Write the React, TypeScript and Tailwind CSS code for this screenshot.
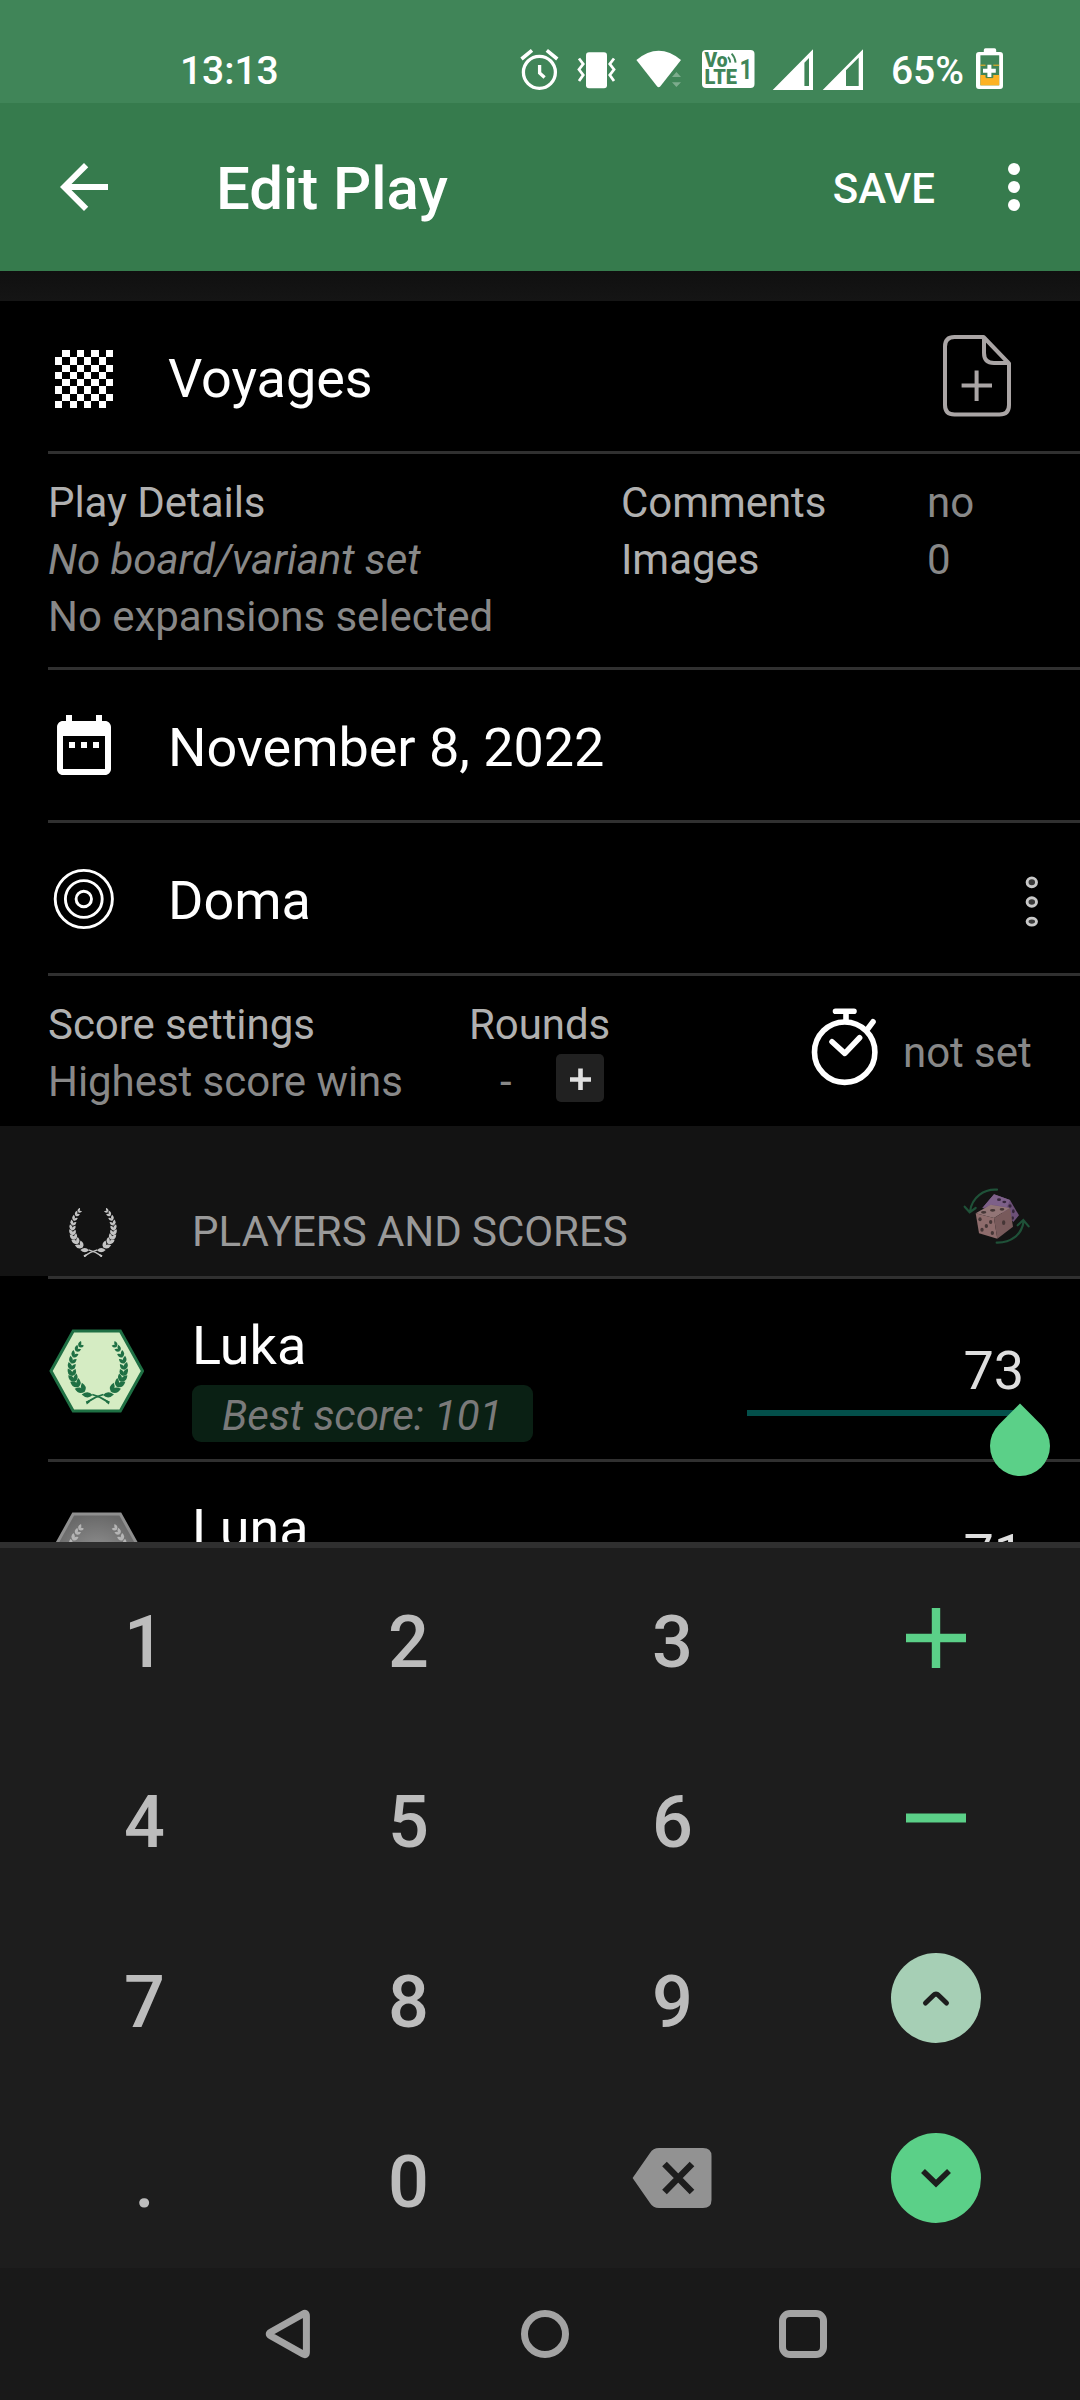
import React from "react";

const Divider = () => <div className="ml-12 h-[3px] shrink-0 bg-[#303030]" />;

type Side = { flip?: boolean };

// Left half of the wreath; leaves are spread along a cubic spine.
const spine = (t: number) => {
  const p = [
    [27, 54],
    [-1, 47],
    [-2, 17],
    [15, 1],
  ];
  const u = 1 - t;
  const x = u * u * u * p[0][0] + 3 * u * u * t * p[1][0] + 3 * u * t * t * p[2][0] + t * t * t * p[3][0];
  const y = u * u * u * p[0][1] + 3 * u * u * t * p[1][1] + 3 * u * t * t * p[2][1] + t * t * t * p[3][1];
  const dx = 3 * u * u * (p[1][0] - p[0][0]) + 6 * u * t * (p[2][0] - p[1][0]) + 3 * t * t * (p[3][0] - p[2][0]);
  const dy = 3 * u * u * (p[1][1] - p[0][1]) + 6 * u * t * (p[2][1] - p[1][1]) + 3 * t * t * (p[3][1] - p[2][1]);
  return { x, y, a: (Math.atan2(dy, dx) * 180) / Math.PI };
};

const LEAVES = [0.02, 0.13, 0.24, 0.34, 0.44, 0.54, 0.64, 0.74, 0.84, 0.92];

const Branch = ({ flip }: Side) => (
  <g transform={flip ? "translate(61 0) scale(-1 1)" : undefined}>
    {LEAVES.map((t, i) => {
      const s = spine(t);
      const l = 11 - i * 0.55;
      const w = 5.4 - i * 0.27;
      const d = `M0 0Q${l * 0.45} ${-w} ${l} 0Q${l * 0.45} ${w} 0 0Z`;
      return (
        <g key={t} transform={`translate(${s.x} ${s.y})`}>
          <path d={d} transform={`rotate(${s.a - 14})`} />
          {i > 0 && <path d={d} transform={`rotate(${s.a + 42}) scale(0.9)`} />}
        </g>
      );
    })}
    <path d="M37.500 58L42.500 60L41.500 63L39 61Z" />
    <path d="M25 53Q34 55.500 41.500 61" fill="none" stroke="currentColor" strokeWidth="1.7" />
  </g>
);

const Wreath = () => (
  <g fill="currentColor">
    <Branch />
    <Branch flip />
  </g>
);

const HexBadge = ({ muted }: { muted?: boolean }) => (
  <svg className="h-[84px] w-24 shrink-0" viewBox="48 1329.5 96 84">
    <defs>
      <radialGradient id="steel">
        <stop offset="0" stopColor="#929292" />
        <stop offset="1" stopColor="#686868" />
      </radialGradient>
    </defs>
    <path
      d="M51 1371.5L73.2 1331.5H120.3L142.5 1371.5L120.3 1411.5H73.2Z"
      fill={muted ? "url(#steel)" : "#d5ecc3"}
      stroke={muted ? "#8f8f8f" : "#1f7044"}
      strokeWidth="3"
    />
    <g transform="translate(67.3 1342)" className={muted ? "text-[#b5b5b5]" : "text-[#1f7044]"}>
      <Wreath />
    </g>
  </svg>
);

const StatusBar = () => (
  <div className="flex h-[103px] shrink-0 items-start bg-[#408558] text-[39px] font-medium leading-[46px]">
    <div className="ml-[180px] w-[340px] pt-[48px]">13:13</div>
    <svg className="mt-[47px] h-[46px] w-[370px]" viewBox="520 47 370 46" fill="none" stroke="#fff" strokeWidth="3.3">
      <circle cx="539.4" cy="72.3" r="16" />
      <path d="M521.5 59L532 50.3M557.3 59L546.8 50.3" strokeWidth="3.6" />
      <path d="M539.6 65V73L544.6 77.5" />
      <rect x="586" y="52.3" width="21" height="36" rx="3" fill="#fff" stroke="none" />
      <path d="M579 58.5L583.2 64L579 69.5L583.2 75L579 81M614 58.5L609.8 64L614 69.5L609.8 75L614 81" strokeWidth="2.8" />
      <path d="M636.4 60Q658.7 41.6 681 60L660.2 86.5Q658.7 88 657.2 86.5Z" fill="#fff" stroke="none" />
      <path d="M672 77L676.4 72L681 77ZM672 82.3L676.4 87L681 82.3Z" fill="#fff" fillOpacity="0.32" stroke="none" />
      <rect x="702" y="50" width="52.5" height="38" rx="4" fill="#fff" stroke="none" />
      <g fill="#408558" stroke="none" className="font-black">
        <text x="704.5" y="67.4" fontSize="19.5" textLength="23" lengthAdjust="spacingAndGlyphs">Vo</text>
        <text x="704.5" y="83.8" fontSize="19.5" textLength="32.5" lengthAdjust="spacingAndGlyphs">LTE</text>
        <text x="739.6" y="79.4" fontSize="27" textLength="13" lengthAdjust="spacingAndGlyphs" className="font-bold">1</text>
      </g>
      <path d="M728 57Q730 59 730.3 62.6M731.6 53.6Q735 57 735.6 62.6" stroke="#408558" strokeWidth="1.9" />
      <path d="M813 49.3V90H772.7ZM809 58L804.4 62.7V86H809Z" fill="#fff" fillRule="evenodd" stroke="none" />
      <path d="M863 49.3V90H822.7ZM858.7 57.5L846 70.3V86H858.7Z" fill="#fff" fillRule="evenodd" stroke="none" />
    </svg>
    <div className="w-[86px] pl-px pt-[48px]">65%</div>
    <svg className="mt-[47px] h-[46px] w-[28px]" viewBox="976 47 28 46">
      <path d="M983.8 52V50Q983.8 48.3 985.5 48.3H994.5Q996.2 48.3 996.2 50V52H1000Q1003 52 1003 55V86Q1003 89 1000 89H979Q976 89 976 86V55Q976 52 979 52Z" fill="#fff" />
      <rect x="980.4" y="55.3" width="18.8" height="30" fill="#408558" />
      <rect x="980.4" y="75" width="18.8" height="10.3" fill="#fdb223" />
      <rect x="980.4" y="64.7" width="18.8" height="1" fill="#fdb223" />
      <path d="M986 64H992.8V67.4H996.4V74.2H992.8V77.6H986V74.2H982.6V67.4H986Z" fill="#408558" stroke="#408558" />
      <path d="M989.4 64.7V77M983 70.8H995.8" stroke="#fff" strokeWidth="4" />
    </svg>
  </div>
);

const AppBar = () => (
  <div className="flex h-[168px] shrink-0 items-center bg-[#367b4d] font-medium">
    <svg className="ml-12 size-[72px]" viewBox="0 0 24 24" fill="#fff">
      <path d="M20 11H7.83l5.59-5.59L12 4l-8 8 8 8 1.41-1.41L7.83 13H20v-2z" />
    </svg>
    <div className="ml-24 flex-1 pt-[4px] text-[60px] leading-[70px]">Edit Play</div>
    <div className="mr-[43px] pt-[4px] text-[42px] leading-[50px]">SAVE</div>
    <svg className="mr-[30px] size-[72px]" viewBox="0 0 24 24" fill="#fff">
      <circle cx="12" cy="6" r="2" />
      <circle cx="12" cy="12" r="2" />
      <circle cx="12" cy="18" r="2" />
    </svg>
  </div>
);

const Checkerboard = () => (
  <svg className="ml-[55px] mt-[5px] h-[58px] w-[58px]" viewBox="0 0 8 8" fill="#fff" shapeRendering="crispEdges">
    {Array.from({ length: 64 }, (_, i) => [i % 8, Math.floor(i / 8)])
      .filter(([c, r]) => (c + r) % 2 === 1)
      .map(([c, r]) => (
        <rect key={`${c}-${r}`} x={c} y={r} width="1" height="1" />
      ))}
  </svg>
);

const GameRow = () => (
  <div className="flex h-[150px] shrink-0 items-center text-[54px] leading-[64px]">
    <Checkerboard />
    <div className="ml-[55px] flex-1 pt-1.5">Voyages</div>
    <svg className="mr-[68px] h-[84px] w-[70px]" viewBox="942 334 70 84" fill="none" stroke="#aaa5a5" strokeWidth="4">
      <path d="M983.5 337H954.5Q945 337 945 346.500V405Q945 414.500 954.500 414.500H999.500Q1009 414.500 1009 405V363.500Z" strokeLinejoin="round" />
      <path d="M984 338V353Q984 363 994 363H1008" />
      <path d="M976.600 370.500V401M961.600 385.600H992" />
    </svg>
  </div>
);

const DetailsRow = () => (
  <div className="flex h-[213px] shrink-0 pl-12 pt-5 text-[42px] leading-[57px] text-[#888]">
    <div className="w-[573px]">
      <div className="text-[#b0b0b0]">Play Details</div>
      <div className="italic">No board/variant set</div>
      <div>No expansions selected</div>
    </div>
    <div className="w-[306px] text-[#b0b0b0]">
      <div>Comments</div>
      <div>Images</div>
    </div>
    <div>
      <div>no</div>
      <div>0</div>
    </div>
  </div>
);

const DateRow = () => (
  <div className="flex h-[150px] shrink-0 items-center text-[54px] leading-[64px]">
    <svg className="ml-12 size-[72px]" viewBox="0 0 24 24" fill="#fff">
      <path d="M9 11H7v2h2v-2zm4 0h-2v2h2v-2zm4 0h-2v2h2v-2zm2-7h-1V2h-2v2H8V2H6v2H5c-1.11 0-1.99.9-1.99 2L3 20c0 1.1.89 2 2 2h14c1.1 0 2-.9 2-2V6c0-1.1-.9-2-2-2zm0 16H5V9h14v11z" />
    </svg>
    <div className="ml-12 pt-1.5">November 8, 2022</div>
  </div>
);

const PlaceRow = () => (
  <div className="flex h-[150px] shrink-0 items-center text-[54px] leading-[64px]">
    <svg className="ml-12 size-[72px]" viewBox="0 0 72 72" fill="none" stroke="#fff" strokeWidth="2.9">
      <circle cx="35.800" cy="37" r="28.600" />
      <circle cx="35.800" cy="37" r="18.400" />
      <circle cx="35.800" cy="37" r="7.700" />
    </svg>
    <div className="ml-12 flex-1 pt-1.5">Doma</div>
    <svg className="mr-[40px] mt-2 h-[54px] w-[16px]" viewBox="1024 875 16 54" fill="#3a3a3a" stroke="#c8c8c8" strokeWidth="2.900">
      <ellipse cx="1031.800" cy="882.300" rx="4.700" ry="4.400" />
      <ellipse cx="1031.800" cy="902" rx="4.700" ry="4.200" />
      <ellipse cx="1031.800" cy="921.600" rx="4.700" ry="3.500" />
    </svg>
  </div>
);

const ScoreRow = () => (
  <div className="flex h-[150px] shrink-0 pl-12 text-[42px] leading-[57px] text-[#888]">
    <div className="w-[421px] pt-5">
      <div className="text-[#b0b0b0]">Score settings</div>
      <div>Highest score wins</div>
    </div>
    <div className="w-[341px] pt-5">
      <div className="text-[#b0b0b0]">Rounds</div>
      <div className="flex items-start">
        <div className="w-[87px] pl-[31px]">-</div>
        <div className="mt-[1px] flex size-12 items-center justify-center rounded-[5px] bg-[#212121]">
          <svg className="size-6" viewBox="0 0 24 24" stroke="#e0e0e0" strokeWidth="4.600">
            <path d="M12.500 3V25M2 14H23" transform="translate(0 -0.500)" />
          </svg>
        </div>
      </div>
    </div>
    <svg className="mt-[30px] h-[82px] w-[70px]" viewBox="810 1006 70 82" fill="none" stroke="#fff" strokeWidth="5.600" strokeLinecap="round" strokeLinejoin="round">
      <circle cx="844.700" cy="1052.200" r="30.200" />
      <path d="M835.500 1011.200H854M846 1012V1021M868 1028.500L873 1021.800M832 1041.800L844.800 1053.400L859.600 1037.800" />
    </svg>
    <div className="ml-[23px] pt-12">not set</div>
  </div>
);

const Dice = () => (
  <svg className="mr-[46px] mt-[56px] h-[64px] w-[74px]" viewBox="598 1024 222 192">
    <path d="M665 1102L700 1061L748 1078L775 1124L758 1144L740 1120Z" fill="#6c5078" />
    <path d="M700 1061L748 1078L738 1100L695 1092L665 1102Z" fill="#7d6089" />
    <g fill="#35263b">
      <ellipse cx="715" cy="1077" rx="6" ry="4" />
      <ellipse cx="731" cy="1084" rx="6" ry="3.500" />
      <ellipse cx="748" cy="1096" rx="5" ry="5" />
      <ellipse cx="758" cy="1112" rx="4" ry="6" />
      <ellipse cx="756" cy="1132" rx="4" ry="5" />
    </g>
    <path d="M645 1118L690 1092L748 1102L700 1132Z" fill="#927576" />
    <path d="M645 1118L700 1132L710 1194L655 1178Z" fill="#8e6c6c" />
    <path d="M700 1132L748 1102L757 1158L710 1194Z" fill="#785a5b" />
    <g fill="#453636">
      <ellipse cx="669" cy="1115" rx="8" ry="4" />
      <ellipse cx="696" cy="1109" rx="8" ry="4" />
      <ellipse cx="724" cy="1106" rx="7" ry="4" />
      <ellipse cx="658" cy="1136" rx="5" ry="6" />
      <ellipse cx="690" cy="1144" rx="5" ry="6" />
      <ellipse cx="677" cy="1156" rx="5" ry="6" />
      <ellipse cx="664" cy="1167" rx="5" ry="6" />
      <ellipse cx="695" cy="1177" rx="5" ry="6" />
      <ellipse cx="729" cy="1146" rx="5" ry="7" />
    </g>
    <g fill="none" stroke="#1f5138" strokeWidth="6.500" strokeLinecap="round">
      <path d="M709 1047C670 1044 634 1070 628 1112M612 1098L627 1115L645 1102" />
      <path d="M708 1206C750 1207 784 1183 789 1141M771 1154L788 1138L804 1157" />
    </g>
  </svg>
);

const PlayersHeader = () => (
  <div className="flex h-[150px] shrink-0 bg-[#131313] text-[42px] leading-[50px] text-[#999]">
    <svg className="ml-[69px] mt-[82px] h-[49px] w-[48px] text-[#c4c4c4]" viewBox="0 0 61 62">
      <Wreath />
    </svg>
    <div className="ml-[75px] flex-1 pt-[81px]">PLAYERS AND SCORES</div>
    <Dice />
  </div>
);

const Player = ({ name, score, best }: { name: string; score: string; best?: string }) => (
  <div className="flex h-[180px] shrink-0 items-start pl-12">
    <div className="pt-[50px]">
      <HexBadge muted={!best} />
    </div>
    <div className="ml-12 w-[555px] pt-[35px] text-[54px] leading-[64px]">
      <div>{name}</div>
      {best && (
        <div className="mt-[7px] h-[57px] w-[341px] rounded-[9px] bg-[#0a2014] pl-[30px] pt-[2px] text-[42px] italic leading-[57px] text-[#7a7a7a]">
          {best}
        </div>
      )}
    </div>
    <div className="relative w-[276px] pt-[60px] text-right text-[54px] leading-[64px] text-[#dedede]">
      <div className="-mr-px">{score}</div>
      {best && (
        <>
          <div className="mt-[7px] h-[6px] bg-[#034f4a]" />
          <div className="absolute -right-[27px] top-[137px] size-[60px] rotate-45 rounded-full rounded-tl-none bg-[#5bd088]" />
        </>
      )}
    </div>
  </div>
);

const Key = ({ children }: { children: React.ReactNode }) => (
  <div className="flex items-center justify-center">{children}</div>
);

const Digit = ({ d }: { d: string }) => (
  <Key>
    <span className="pl-px pt-[9px] leading-[84px]">{d}</span>
  </Key>
);

const Keypad = () => (
  <div className="grid h-[726px] shrink-0 grid-cols-4 grid-rows-4 border-t-[6px] border-[#2f2f2f] bg-[#1d1d1d] px-3 text-[72px] font-medium text-[#bcbcbc]">
    <Digit d="1" />
    <Digit d="2" />
    <Digit d="3" />
    <Key>
      <svg className="size-[60px]" viewBox="0 0 60 60" stroke="#5bd088" strokeWidth="8.400">
        <path d="M30 0V60M0 30H60" />
      </svg>
    </Key>
    <Digit d="4" />
    <Digit d="5" />
    <Digit d="6" />
    <Key>
      <svg className="size-[60px]" viewBox="0 0 60 60" stroke="#5bd088" strokeWidth="9">
        <path d="M0 30H60" />
      </svg>
    </Key>
    <Digit d="7" />
    <Digit d="8" />
    <Digit d="9" />
    <Key>
      <div className="flex size-[90px] items-center justify-center rounded-full bg-[#a6cfb5]">
        <svg className="size-[90px]" viewBox="0 0 90 90" fill="none" stroke="#1d1d1d" strokeWidth="5" strokeLinecap="round">
          <path d="M34.500 50L42.500 42.300Q45 39.600 47.500 42.300L55.500 50" />
        </svg>
      </div>
    </Key>
    <Digit d="." />
    <Digit d="0" />
    <Key>
      <svg className="h-[60px] w-20" viewBox="0 0 80 60">
        <path d="M0.600 30L18 5Q21 0 27 0H71Q79.500 0 79.500 8V52Q79.500 60 71 60H27Q21 60 18 55Z" fill="#929292" />
        <path d="M32.500 16L60 44M60 16L32.500 44" stroke="#1d1d1d" strokeWidth="6.500" />
      </svg>
    </Key>
    <Key>
      <div className="flex size-[90px] items-center justify-center rounded-full bg-[#5bd088]">
        <svg className="size-[90px]" viewBox="0 0 90 90" fill="none" stroke="#1d1d1d" strokeWidth="5.600">
          <path d="M32 38L45 50.500L58 38" />
        </svg>
      </div>
    </Key>
  </div>
);

const NavBar = () => (
  <div className="flex h-[132px] shrink-0 items-center bg-[#191919]">
    <svg className="ml-[262px] h-[54px] w-[51px]" viewBox="262 2307 51 54" fill="none" stroke="#a3a3a3" strokeWidth="7" strokeLinejoin="round">
      <path d="M306.400 2316V2352Q306.400 2356 303 2354L271 2336Q267.500 2334 271 2332L303 2314Q306.400 2312 306.400 2316Z" />
    </svg>
    <div className="ml-[208px] size-12 rounded-full border-[7px] border-[#a3a3a3]" />
    <div className="ml-[210px] size-12 rounded-[11px] border-[7px] border-[#a3a3a3]" />
  </div>
);

export default function App() {
  return (
    <div className="flex h-[2400px] w-[1080px] flex-col overflow-hidden bg-black font-['Roboto',sans-serif] tracking-[-0.05px] text-white">
      <StatusBar />
      <AppBar />
      <div className="h-[30px] shrink-0 bg-linear-to-b from-[#101010] to-[#151515]" />
      <GameRow />
      <Divider />
      <DetailsRow />
      <Divider />
      <DateRow />
      <Divider />
      <PlaceRow />
      <Divider />
      <ScoreRow />
      <PlayersHeader />
      <div className="flex h-[266px] shrink-0 flex-col overflow-hidden">
        <Divider />
        <Player name="Luka" score="73" best="Best score: 101" />
        <Divider />
        <Player name="Luna" score="71" />
      </div>
      <Keypad />
      <NavBar />
    </div>
  );
}
